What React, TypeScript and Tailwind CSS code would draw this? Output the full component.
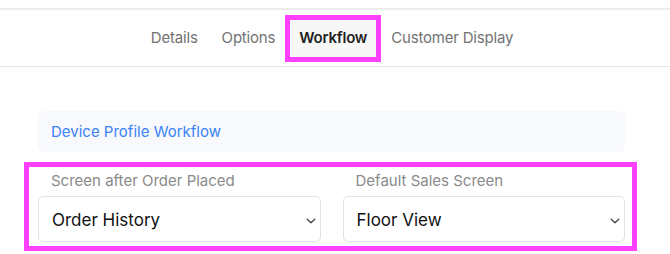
export default function App() {
  const tabs = ['Details', 'Options', 'Workflow', 'Customer Display'];
  const active = 'Workflow';

  const fields = [
    { label: 'Screen after Order Placed', value: 'Order History' },
    { label: 'Default Sales Screen', value: 'Floor View' },
  ];

  return (
    <div className="w-[670px] h-[254px] overflow-hidden bg-white font-['Inter',sans-serif]">
      {/* Tab bar */}
      <nav className="mt-[8px] h-[59px] pr-[6px] border-t-2 border-b border-t-[#ececec] border-b-[#e6e6e6] flex items-center justify-center">
        {tabs.map((t) =>
          t === active ? (
            <div
              key={t}
              className="-mx-[2px] h-[47px] flex items-center border-[5px] border-[#ff40ff] bg-[#f7f7f7] px-[9px] text-[15px] tracking-[-0.2px] font-semibold text-[#1f1f1f]"
            >
              {t}
            </div>
          ) : (
            <div key={t} className="px-3 text-[15px] tracking-[-0.2px] text-[#727272]">
              {t}
            </div>
          )
        )}
      </nav>

      <div className="pt-[44px] pl-[38px] pr-[45px]">
        {/* Section header */}
        <div className="h-[41px] rounded-[6px] bg-[#f8f9fc] pl-[13px] pt-[1px] flex items-center text-[15px] text-[#3b82f6]">
          Device Profile Workflow
        </div>

        {/* Highlighted fields */}
        <div className="mt-[10px] -ml-[14px] -mr-[12px] border-[5px] border-[#ff40ff] pl-[9px] pr-[7px] pt-[4px] pb-[4px] grid grid-cols-2 gap-x-[22px]">
          {fields.map((f) => (
            <div key={f.label}>
              <div className="h-[20px] leading-[20px] pl-[13px] text-[15px] text-[#8a8a8a]">{f.label}</div>
              <div className="mt-[5px] h-[46px] rounded-[5px] border border-[#e2e2e2] pl-[13px] pr-[4px] pt-[3px] flex items-center justify-between text-[17px] text-[#111]">
                <span>{f.value}</span>
                <svg width="10" height="6" viewBox="0 0 10 6" fill="none">
                  <path d="M1.2 1.2L5 4.8L8.8 1.2" stroke="#3a3a3a" strokeWidth="1.2" strokeLinecap="round" strokeLinejoin="round" />
                </svg>
              </div>
            </div>
          ))}
        </div>
      </div>
    </div>
  );
}
